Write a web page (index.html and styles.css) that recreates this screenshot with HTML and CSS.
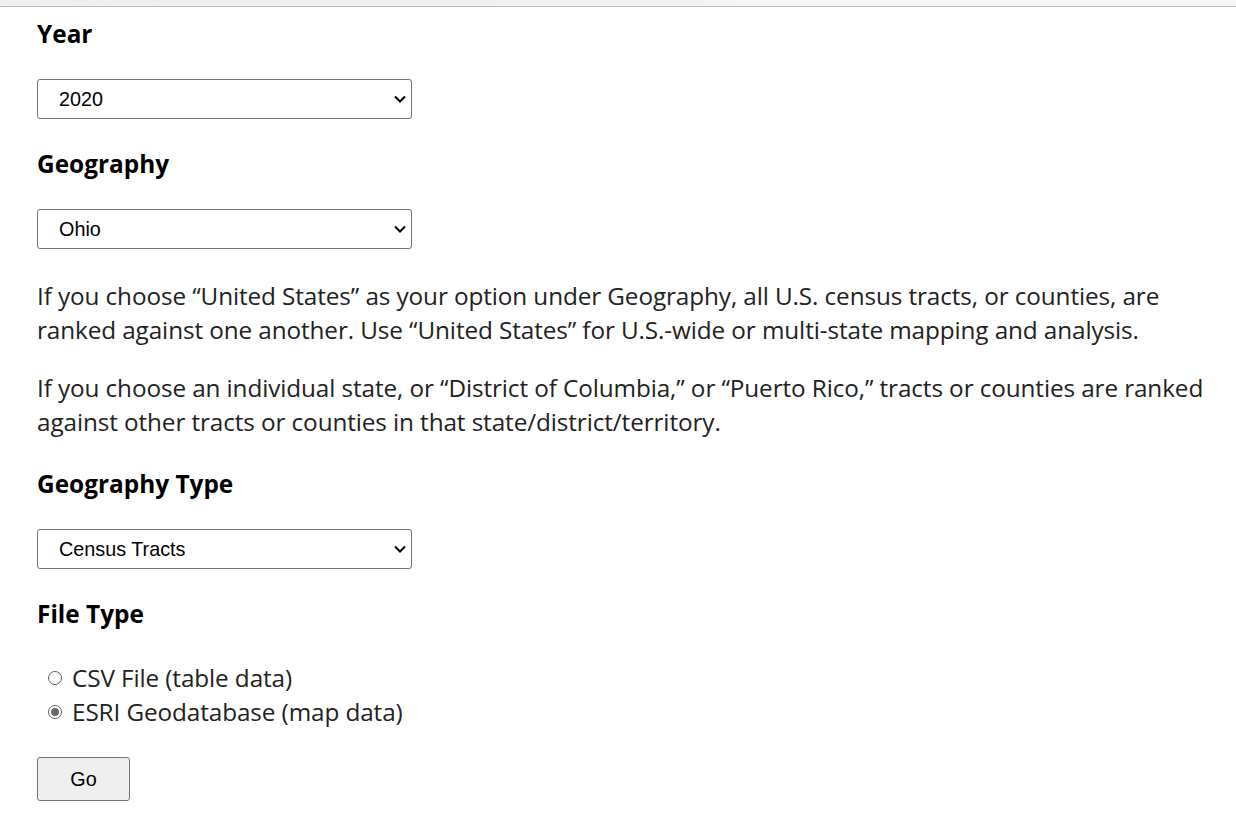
FILE: index.html
```html
<!DOCTYPE html>
<html>
<head>
<meta charset="utf-8">
<link rel="stylesheet" href="styles.css">
</head>
<body>
<div class="topbar"></div>
<form class="form">
  <h3 class="label first">Year</h3>
  <div class="select-wrap">
    <select class="select"><option>2020</option></select>
    <svg class="chev" viewBox="0 0 12 8" width="12" height="8"><path d="M1 1.5 L6 6.5 L11 1.5" fill="none" stroke="#000" stroke-width="2"/></svg>
  </div>
  <h3 class="label">Geography</h3>
  <div class="select-wrap">
    <select class="select"><option>Ohio</option></select>
    <svg class="chev" viewBox="0 0 12 8" width="12" height="8"><path d="M1 1.5 L6 6.5 L11 1.5" fill="none" stroke="#000" stroke-width="2"/></svg>
  </div>
  <p class="text p1">If you choose “United States” as your option under Geography, all U.S. census tracts, or counties, are ranked against one another. Use “United States” for U.S.-wide or multi-state mapping and analysis.</p>
  <p class="text p2">If you choose an individual state, or “District of Columbia,” or “Puerto Rico,” tracts or counties are ranked against other tracts or counties in that state/district/territory.</p>
  <h3 class="label">Geography Type</h3>
  <div class="select-wrap">
    <select class="select"><option>Census Tracts</option></select>
    <svg class="chev" viewBox="0 0 12 8" width="12" height="8"><path d="M1 1.5 L6 6.5 L11 1.5" fill="none" stroke="#000" stroke-width="2"/></svg>
  </div>
  <h3 class="label">File Type</h3>
  <div class="radios">
    <label class="radio"><span class="dot"></span>CSV File (table data)</label>
    <label class="radio"><span class="dot checked"></span>ESRI Geodatabase (map data)</label>
  </div>
  <button type="button" class="go">Go</button>
</form>
</body>
</html>
```
FILE: styles.css
```css
html, body {
  margin: 0;
  padding: 0;
  background: #fff;
}
body {
  font-family: "Open Sans", "Noto Sans", sans-serif;
  color: #222;
}
.topbar {
  height: 6px;
  background: linear-gradient(90deg, #efefef 0%, #f1f1f1 55%, #f6f6f6 60%, #f6f6f6 100%);
  border-bottom: 1px solid #bdbdbd;
}
.form {
  padding-left: 37px;
}
.label {
  margin: 31px 0 0;
  font-size: 24.4px;
  line-height: 28px;
  font-weight: 700;
  color: #000;
}
.label.first {
  margin-top: 13px;
}
.select-wrap {
  position: relative;
  width: 375px;
  height: 40px;
  margin-top: 31px;
}
.select {
  -webkit-appearance: none;
  appearance: none;
  width: 375px;
  height: 40px;
  box-sizing: border-box;
  border: 1px solid #767676;
  border-radius: 3px;
  background: #fff;
  padding: 0 0 0 21px;
  font-family: "Liberation Sans", Arial, sans-serif;
  font-size: 19.8px;
  color: #000;
  display: block;
}
.chev {
  position: absolute;
  right: 6px;
  top: 16px;
  pointer-events: none;
}
.text {
  margin: 0;
  font-size: 24.3px;
  line-height: 34px;
  max-width: 1185px;
  letter-spacing: -0.1px;
}
.p1 { margin-top: 30px; }
.p2 { margin-top: 24px; }
.radios {
  margin-top: 33px;
  display: flex;
  flex-direction: column;
}
.radio {
  display: flex;
  align-items: center;
  font-size: 24.3px;
  letter-spacing: -0.1px;
  line-height: 34px;
  padding-left: 11px;
}
.dot {
  width: 14px;
  height: 14px;
  border: 1px solid #5f5f5f;
  border-radius: 50%;
  margin-right: 10px;
  box-sizing: border-box;
  position: relative;
  background: #fff;
}
.dot.checked::after {
  content: "";
  position: absolute;
  left: 2px;
  top: 2px;
  width: 8px;
  height: 8px;
  border-radius: 50%;
  background: #6b6b6b;
}
.go {
  margin-top: 28px;
  width: 93px;
  height: 44px;
  border: 1px solid #767676;
  border-radius: 3px;
  background: #efefef;
  font-family: "Liberation Sans", Arial, sans-serif;
  font-size: 19.8px;
  color: #000;
  display: block;
  padding: 0;
}
```
